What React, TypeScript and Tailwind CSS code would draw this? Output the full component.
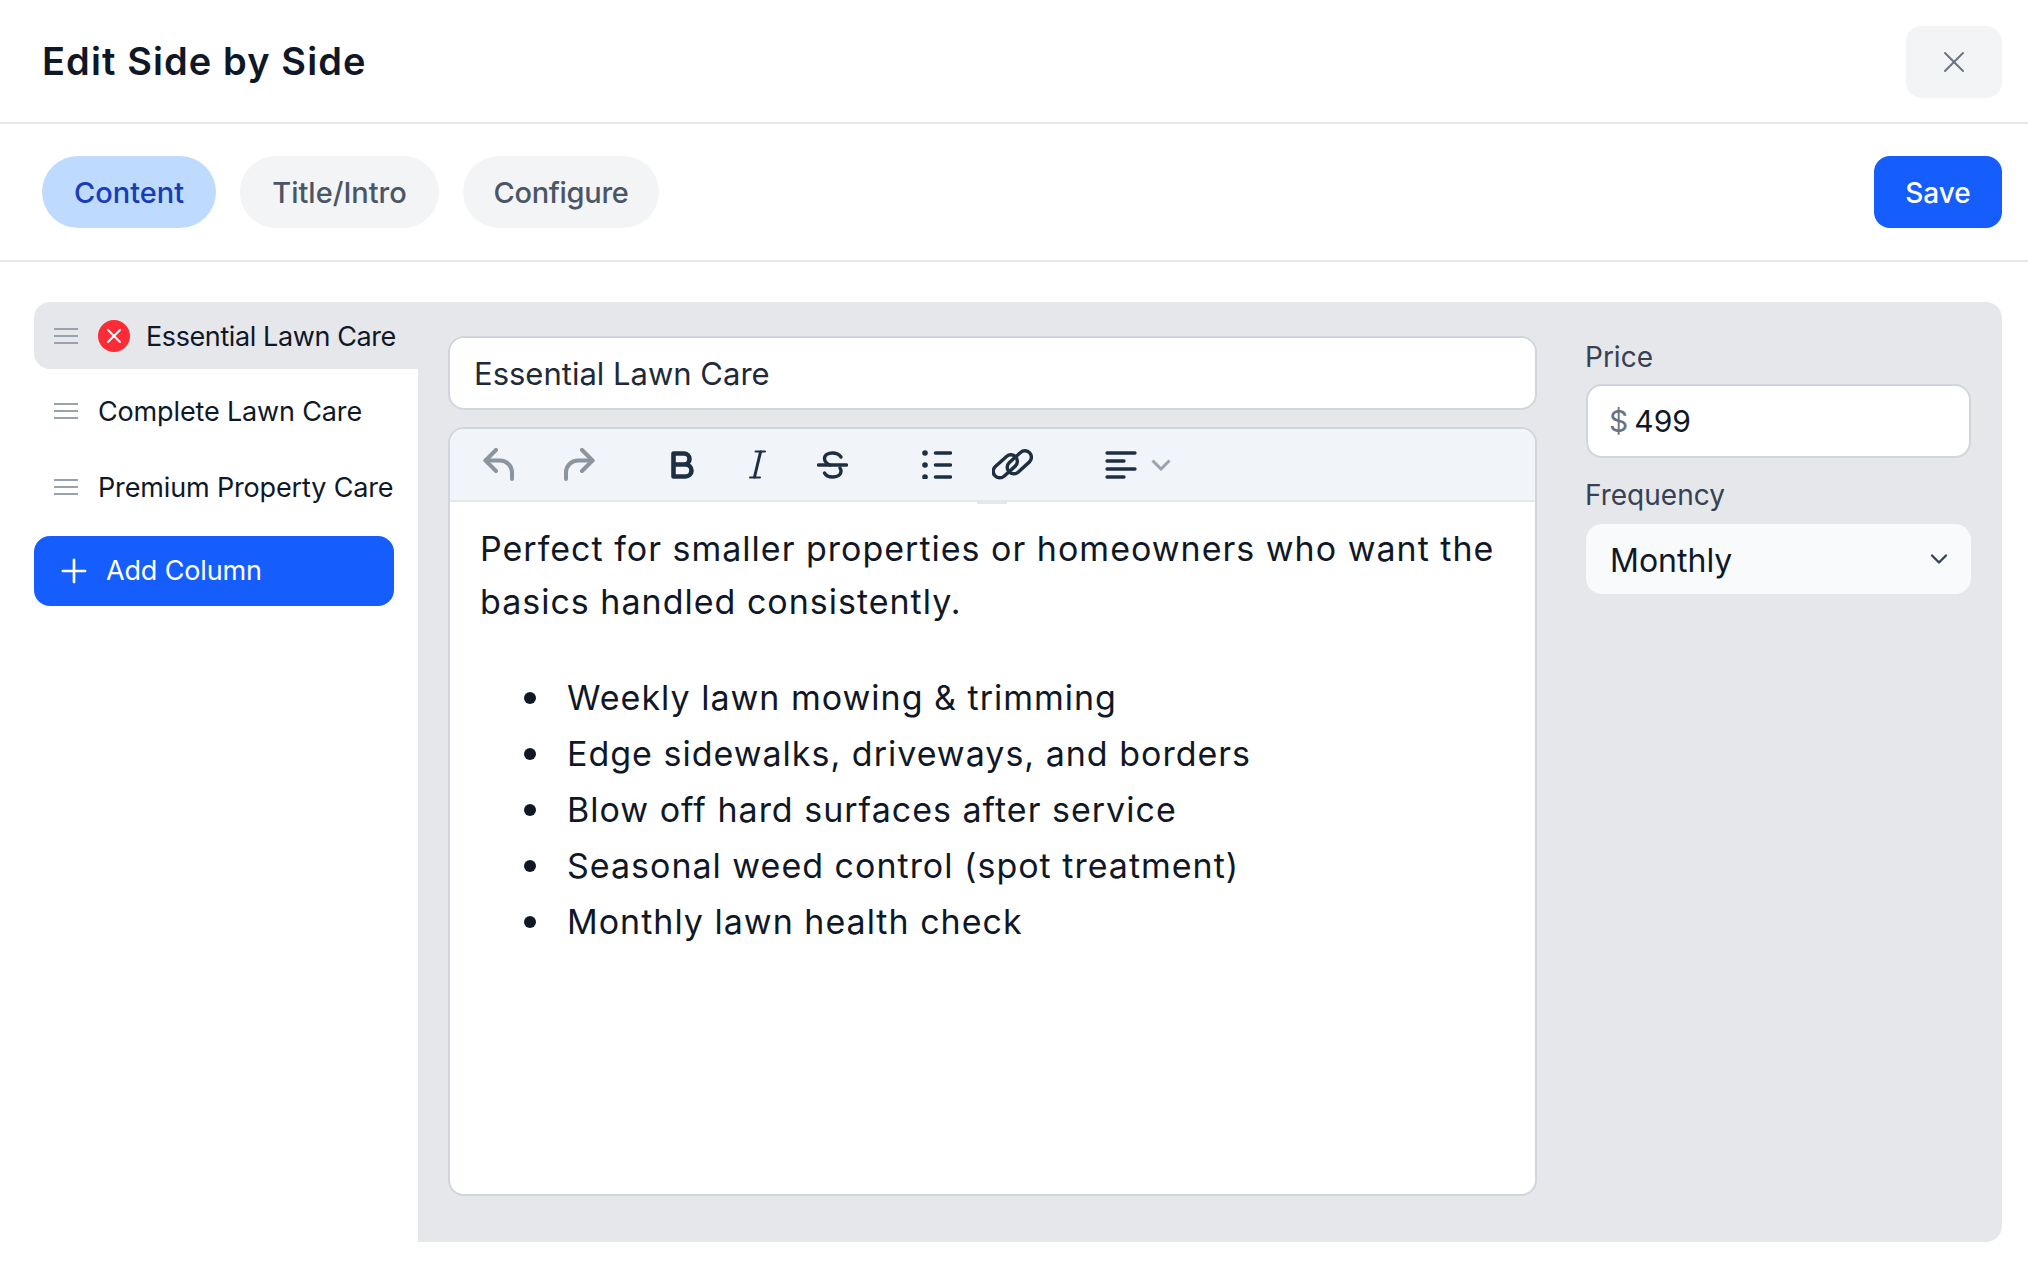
import React from 'react';
import { X, Plus, ChevronDown } from 'lucide-react';

const BULLETS = [
  'Weekly lawn mowing & trimming',
  'Edge sidewalks, driveways, and borders',
  'Blow off hard surfaces after service',
  'Seasonal weed control (spot treatment)',
  'Monthly lawn health check',
];

const INK = '#1f2f42';

const DragHandle = () => (
  <svg width="24" height="18" viewBox="0 0 24 18" className="shrink-0 text-gray-400" fill="none" stroke="currentColor" strokeWidth="2">
    <path d="M0 2h24M0 9h24M0 16h24" />
  </svg>
);

const Undo = ({ flip }: { flip?: boolean }) => (
  <svg width="32" height="33" viewBox="0 0 32 33" fill="none" stroke="#8c949e" strokeWidth="4" strokeLinecap="round" strokeLinejoin="round" className={flip ? '-scale-x-100' : ''}>
    <path d="M13 2 2.5 12.5 13 23" />
    <path d="M2.5 12.5H17a12 12 0 0 1 12 12V31" />
  </svg>
);

const BoldIcon = () => (
  <svg width="23" height="28" viewBox="0 0 23 28" fill="none" stroke={INK} strokeWidth="4.6" strokeLinejoin="round" className="overflow-visible">
    <path d="M2.5 2.5h10.5a5.500 5.500 0 0 1 0 11H2.500zM2.500 13.500h12a6 6 0 0 1 0 12H2.500z" />
  </svg>
);

const ItalicIcon = () => (
  <svg width="17" height="29" viewBox="0 0 17 29" fill="none" stroke={INK} strokeLinecap="round">
    <path d="M6.500 1.500H16M1 27.500h10" strokeWidth="2" />
    <path d="M11.500 2 5.500 27" strokeWidth="3" />
  </svg>
);

const StrikeIcon = () => (
  <svg width="31" height="28" viewBox="0 0 31 28" fill="none" stroke={INK} strokeWidth="3.4" strokeLinecap="round">
    <path d="M1.500 14h28" />
    <path d="M24 6c-2-3-5-4-8.500-4C11 2 7.500 4 7.500 7.500c0 3 2 5 5.500 6.500" />
    <path d="M23 17c1 1.500 1 2 1 3 0 4-4 6-8.500 6-3.500 0-6.500-1-8-4" />
  </svg>
);

const ListIcon = () => (
  <svg width="30" height="29" viewBox="0 0 30 29" fill={INK} stroke={INK}>
    <circle cx="3" cy="3" r="2.800" stroke="none" />
    <circle cx="3" cy="15" r="2.800" stroke="none" />
    <circle cx="3" cy="27" r="2.800" stroke="none" />
    <path d="M13.500 3h15M13.500 15h15M13.500 27h15" strokeWidth="3.500" strokeLinecap="round" />
  </svg>
);

const LinkIcon = () => (
  <svg width="41" height="31" viewBox="0 0 41 31" fill="none" stroke={INK} strokeWidth="3.400">
    <rect x="-0.700" y="10.800" width="28" height="13" rx="6.500" transform="rotate(-42 13.300 17.300)" />
    <rect x="13.300" y="6.800" width="28" height="13" rx="6.500" transform="rotate(-42 27.300 13.300)" />
  </svg>
);

const AlignIcon = () => (
  <svg width="32" height="28" viewBox="0 0 32 28" stroke={INK} strokeWidth="3.300" strokeLinecap="round">
    <path d="M2 2h28M2 10h17M2 18h28M2 26h17" />
  </svg>
);

const SmallChevron = () => (
  <svg width="20" height="12" viewBox="0 0 20 12" fill="none" stroke="#9ca3af" strokeWidth="3">
    <path d="M1.500 1.500 10 10l8.500-8.500" />
  </svg>
);

const App: React.FC = () => {
  return (
    <div className="w-[2028px] h-[1268px] overflow-hidden bg-white text-gray-900 font-['Inter',sans-serif] flex flex-col">
      {/* header */}
      <div className="h-[124px] shrink-0 border-b-2 border-gray-200 pl-[42px] pr-[26px] flex items-center justify-between">
        <h1 className="text-[38px] font-semibold tracking-[1.1px]">Edit Side by Side</h1>
        <button className="mt-[2px] w-[96px] h-[72px] rounded-2xl bg-gray-100 flex items-center justify-center text-gray-500">
          <X className="w-[36px] h-[36px]" strokeWidth={1.3} />
        </button>
      </div>

      {/* tabs */}
      <div className="h-[138px] shrink-0 border-b-2 border-gray-200 pl-[42px] pr-[26px] flex items-center justify-between">
        <div className="flex gap-6 text-[29px] font-medium">
          <button className="w-[174px] h-[72px] pt-[2px] rounded-full bg-blue-200 text-blue-800">Content</button>
          <button className="w-[199px] h-[72px] pt-[2px] rounded-full bg-gray-100 text-gray-600">Title/Intro</button>
          <button className="w-[196px] h-[72px] pt-[2px] rounded-full bg-gray-100 text-gray-600 tracking-[-0.3px]">Configure</button>
        </div>
        <button className="w-[128px] h-[72px] pt-[2px] rounded-2xl bg-blue-600 text-white text-[28px] font-medium">Save</button>
      </div>

      {/* body */}
      <div className="flex-1 flex pl-[34px] pr-[26px] pt-[40px] pb-[26px]">
        <div className="w-[384px] shrink-0 flex flex-col gap-2 text-[27px] tracking-[-0.15px]">
          <div className="h-[67px] rounded-l-2xl bg-gray-200 pl-5 flex items-center">
            <DragHandle />
            <span className="ml-5 w-8 h-8 rounded-full bg-red-500 flex items-center justify-center text-white shrink-0">
              <X className="w-6 h-6" strokeWidth={2} />
            </span>
            <span className="ml-4 pt-[3px] tracking-[-0.4px]">Essential Lawn Care</span>
          </div>
          <div className="h-[68px] pl-5 flex items-center">
            <DragHandle />
            <span className="ml-5 pt-[2px]">Complete Lawn Care</span>
          </div>
          <div className="h-[68px] pl-5 flex items-center">
            <DragHandle />
            <span className="ml-5 pt-[2px]">Premium Property Care</span>
          </div>
          <button className="mt-[7px] w-[360px] h-[70px] rounded-2xl bg-blue-600 text-white pl-[21px] flex items-center gap-[13px]">
            <Plus className="w-[38px] h-[38px]" strokeWidth={1.7} />
            Add Column
          </button>
        </div>

        <div className="flex-1 rounded-r-2xl bg-gray-200 pl-[30px] pr-[31px] pt-[34px] pb-[46px] flex gap-[48px]">
          <div className="w-[1089px] shrink-0 flex flex-col gap-[17px]">
            <div className="h-[74px] shrink-0 rounded-2xl border-2 border-gray-300 bg-white pl-[24px] pr-6 pt-[2px] flex items-center text-[31px] text-gray-800">
              Essential Lawn Care
            </div>
            <div className="relative flex-1 rounded-2xl border-2 border-gray-300 bg-white overflow-hidden">
              <div className="h-[73px] bg-slate-100 border-b-2 border-gray-200 relative">
                <div className="absolute left-[527px] -bottom-[4px] w-[30px] h-[3px] bg-gray-200" />
                <div className="h-full pl-[33px] flex items-center">
                  <Undo />
                  <span className="ml-[48px] flex"><Undo flip /></span>
                  <span className="ml-[76px] flex"><BoldIcon /></span>
                  <span className="ml-[55px] flex"><ItalicIcon /></span>
                  <span className="ml-[51px] flex"><StrikeIcon /></span>
                  <span className="ml-[74px] flex"><ListIcon /></span>
                  <span className="ml-[40px] flex"><LinkIcon /></span>
                  <span className="ml-[72px] flex"><AlignIcon /></span>
                  <span className="ml-[14px] flex"><SmallChevron /></span>
                </div>
              </div>
              <div className="pl-[30px] pr-[29px] pt-[20px] text-[34px] tracking-[1px] text-gray-900">
                <p className="leading-[53px]">Perfect for smaller properties or homeowners who want the basics handled consistently.</p>
                <ul className="mt-[42px] pl-[44px] leading-[56px]">
                  {BULLETS.map((b) => (
                    <li key={b} className="flex items-center gap-[31px]">
                      <span className="w-[12px] h-[12px] rounded-full bg-gray-900 shrink-0" />
                      {b}
                    </li>
                  ))}
                </ul>
              </div>
            </div>
          </div>

          <div className="flex-1 flex flex-col">
            <div className="mt-[4px] text-[28px] text-gray-700 leading-[34px]">Price</div>
            <div className="mt-[10px] ml-[1px] h-[74px] rounded-2xl border-2 border-gray-300 bg-white pl-[21px] flex items-center text-[30px]">
              <span className="text-gray-500 mr-[6px]">$</span>499
            </div>
            <div className="mt-[20px] text-[28px] text-gray-700 leading-[34px]">Frequency</div>
            <div className="mt-[12px] ml-[1px] h-[70px] rounded-2xl bg-gray-50 pl-6 pr-[18px] flex items-center justify-between text-[32px]">
              <span className="pt-[3px]">Monthly</span>
              <ChevronDown className="w-[28px] h-[28px] text-gray-700" strokeWidth={2} />
            </div>
          </div>
        </div>
      </div>
    </div>
  );
};

export default App;
